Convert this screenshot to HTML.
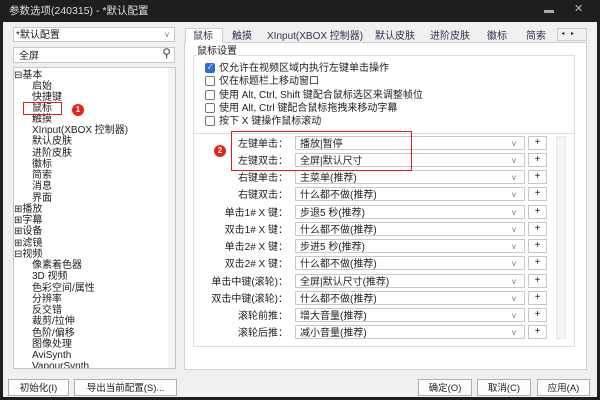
<!DOCTYPE html><html><head><meta charset="utf-8"><style>
*{margin:0;padding:0;box-sizing:border-box}
body{width:600px;height:400px;overflow:hidden;background:#1e1e1e;font-family:"Liberation Sans","Noto Sans CJK SC",sans-serif;font-size:10px;line-height:12px;color:#222;position:relative}
.a{position:absolute}
.win{left:3px;top:22px;width:594px;height:375px;background:#f0f0f0}
.box{background:#fff;border:1px solid #c8c8c8}
.t{position:absolute;white-space:nowrap;line-height:11px}
.cb{position:absolute;width:10px;height:10px;border:1px solid #777;border-radius:2px;background:#fff}
.lbl{position:absolute;width:100px;text-align:right;left:188px;white-space:nowrap;height:14px;line-height:12px;padding-top:3px}
.combo{position:absolute;left:295px;width:230px;height:14px;border:1px solid #c8c8c8;background:#fff;padding-left:4px;padding-top:2px;line-height:11px;white-space:nowrap}
.combo:after{content:"v";position:absolute;right:8px;top:1px;color:#777;font-size:8px}
.pl{position:absolute;left:528px;width:19px;height:14px;border:1px solid #c8c8c8;background:#fff;text-align:center;line-height:12px}
.btn{position:absolute;top:379px;height:17px;border:1px solid #b0b0b0;background:#fdfdfd;text-align:center;line-height:12px;padding-top:3px;font-size:9.5px}
.red{position:absolute;border:1.5px solid #e0201c}
.circ{position:absolute;width:12px;height:12px;border-radius:6px;background:#e52317;color:#fff;font-size:8px;text-align:center;line-height:12px;font-weight:bold}
</style></head><body>
<div class="t" style="left:9px;top:5px;color:#ddd;font-size:10.5px;line-height:12px">参数选项(240315) - *默认配置</div>
<div class="t" style="left:544px;top:5px;color:#aaa;font-size:10px">▬</div>
<div class="t" style="left:574px;top:4px;color:#bbb;font-size:11px">✕</div>
<div class="a win"></div>
<div class="a box" style="left:13px;top:27px;width:162px;height:15px"><span class="t" style="left:2px;top:2px">*默认配置</span><span class="t" style="right:5px;top:1px;color:#777;font-size:8px">v</span></div>
<div class="a box" style="left:13px;top:47px;width:162px;height:16px"><span class="t" style="left:5px;top:3px">全屏</span><span class="t" style="right:3px;top:0;font-size:12px;color:#444">⚲</span></div>
<div class="a box" style="left:13px;top:67px;width:163px;height:302px;overflow:hidden">
<div class="a" style="left:154px;top:0;width:8px;height:300px;background:#f4f4f4"></div>
<div class="t" style="left:0;top:2px">⊟基本</div>
<div class="t" style="left:18px;top:13px">启始</div>
<div class="t" style="left:18px;top:24px">快捷键</div>
<div class="t" style="left:18px;top:35px">鼠标</div>
<div class="t" style="left:18px;top:46px">触摸</div>
<div class="t" style="left:18px;top:57px">XInput(XBOX 控制器)</div>
<div class="t" style="left:18px;top:68px">默认皮肤</div>
<div class="t" style="left:18px;top:80px">进阶皮肤</div>
<div class="t" style="left:18px;top:91px">徽标</div>
<div class="t" style="left:18px;top:102px">简索</div>
<div class="t" style="left:18px;top:113px">消息</div>
<div class="t" style="left:18px;top:125px">界面</div>
<div class="t" style="left:0;top:136px">⊞播放</div>
<div class="t" style="left:0;top:147px">⊞字幕</div>
<div class="t" style="left:0;top:158px">⊞设备</div>
<div class="t" style="left:0;top:170px">⊞滤镜</div>
<div class="t" style="left:0;top:181px">⊟视频</div>
<div class="t" style="left:18px;top:192px">像素着色器</div>
<div class="t" style="left:18px;top:203px">3D 视频</div>
<div class="t" style="left:18px;top:215px">色彩空间/属性</div>
<div class="t" style="left:18px;top:226px">分辨率</div>
<div class="t" style="left:18px;top:237px">反交错</div>
<div class="t" style="left:18px;top:248px">裁剪/拉伸</div>
<div class="t" style="left:18px;top:260px">色阶/偏移</div>
<div class="t" style="left:18px;top:271px">图像处理</div>
<div class="t" style="left:18px;top:282px">AviSynth</div>
<div class="t" style="left:18px;top:293px">VapourSynth</div>
</div>
<div class="red" style="left:23px;top:102px;width:39px;height:13px"></div>
<div class="circ" style="left:72px;top:104px">1</div>
<div class="a" style="left:184px;top:42px;width:403px;height:328px;background:#fff;border:1px solid #d0d0d0"></div>
<div class="a" style="left:185px;top:28px;width:38px;height:15px;background:#fff;border:1px solid #d0d0d0;border-bottom:none"></div>
<div class="t" style="left:193px;top:31px;color:#335">鼠标</div>
<div class="t" style="left:232px;top:31px;color:#335">触摸</div>
<div class="t" style="left:267px;top:31px;color:#335">XInput(XBOX 控制器)</div>
<div class="t" style="left:375px;top:31px;color:#335">默认皮肤</div>
<div class="t" style="left:430px;top:31px;color:#335">进阶皮肤</div>
<div class="t" style="left:487px;top:31px;color:#335">徽标</div>
<div class="t" style="left:526px;top:31px;color:#335">简索</div>
<div class="a" style="left:557px;top:28px;width:30px;height:13px;border:1px solid #ccc;background:#f0f0f0;font-size:6px;line-height:11px">&nbsp;&nbsp;◂&nbsp;&nbsp;&nbsp;&nbsp;▸</div>
<div class="a" style="left:193px;top:55px;width:382px;height:292px;border:1px solid #ddd"></div>
<div class="t" style="left:196px;top:46px;background:#fff;padding:0 1px">鼠标设置</div>
<div class="cb" style="left:205px;top:63px;background:#2b6fd0;border-color:#2b6fd0;color:#fff;font-size:7px;line-height:8px;text-align:center">✓</div>
<div class="t" style="left:219px;top:63px">仅允许在视频区域内执行左键单击操作</div>
<div class="cb" style="left:205px;top:76px"></div><div class="t" style="left:219px;top:76px">仅在标题栏上移动窗口</div>
<div class="cb" style="left:205px;top:90px"></div><div class="t" style="left:219px;top:90px">使用 Alt, Ctrl, Shift 键配合鼠标选区来调整帧位</div>
<div class="cb" style="left:205px;top:103px"></div><div class="t" style="left:219px;top:103px">使用 Alt, Ctrl 键配合鼠标拖拽来移动字幕</div>
<div class="cb" style="left:205px;top:116px"></div><div class="t" style="left:219px;top:116px">按下 X 键操作鼠标滚动</div>
<div class="a" style="left:194px;top:133px;width:380px;height:1px;background:#ddd"></div>
<div class="a" style="left:556px;top:136px;width:10px;height:203px;background:#f4f4f4;border:1px solid #e8e8e8"></div>
<div class="lbl" style="top:136px">左键单击：</div><div class="combo" style="top:136px">播放|暂停</div><div class="pl" style="top:136px">+</div>
<div class="lbl" style="top:153px">左键双击：</div><div class="combo" style="top:153px">全屏|默认尺寸</div><div class="pl" style="top:153px">+</div>
<div class="lbl" style="top:170px">右键单击：</div><div class="combo" style="top:170px">主菜单(推荐)</div><div class="pl" style="top:170px">+</div>
<div class="lbl" style="top:187px">右键双击：</div><div class="combo" style="top:187px">什么都不做(推荐)</div><div class="pl" style="top:187px">+</div>
<div class="lbl" style="top:205px">单击1# X 键：</div><div class="combo" style="top:205px">步退5 秒(推荐)</div><div class="pl" style="top:205px">+</div>
<div class="lbl" style="top:222px">双击1# X 键：</div><div class="combo" style="top:222px">什么都不做(推荐)</div><div class="pl" style="top:222px">+</div>
<div class="lbl" style="top:239px">单击2# X 键：</div><div class="combo" style="top:239px">步进5 秒(推荐)</div><div class="pl" style="top:239px">+</div>
<div class="lbl" style="top:256px">双击2# X 键：</div><div class="combo" style="top:256px">什么都不做(推荐)</div><div class="pl" style="top:256px">+</div>
<div class="lbl" style="top:274px">单击中键(滚轮)：</div><div class="combo" style="top:274px">全屏|默认尺寸(推荐)</div><div class="pl" style="top:274px">+</div>
<div class="lbl" style="top:291px">双击中键(滚轮)：</div><div class="combo" style="top:291px">什么都不做(推荐)</div><div class="pl" style="top:291px">+</div>
<div class="lbl" style="top:308px">滚轮前推：</div><div class="combo" style="top:308px">增大音量(推荐)</div><div class="pl" style="top:308px">+</div>
<div class="lbl" style="top:325px">滚轮后推：</div><div class="combo" style="top:325px">减小音量(推荐)</div><div class="pl" style="top:325px">+</div>
<div class="red" style="left:231px;top:131px;width:181px;height:40px"></div>
<div class="circ" style="left:214px;top:145px">2</div>
<div class="btn" style="left:8px;width:61px">初始化(I)</div>
<div class="btn" style="left:74px;width:103px">导出当前配置(S)...</div>
<div class="btn" style="left:418px;width:54px">确定(O)</div>
<div class="btn" style="left:477px;width:54px">取消(C)</div>
<div class="btn" style="left:537px;width:53px">应用(A)</div>
</body></html>
